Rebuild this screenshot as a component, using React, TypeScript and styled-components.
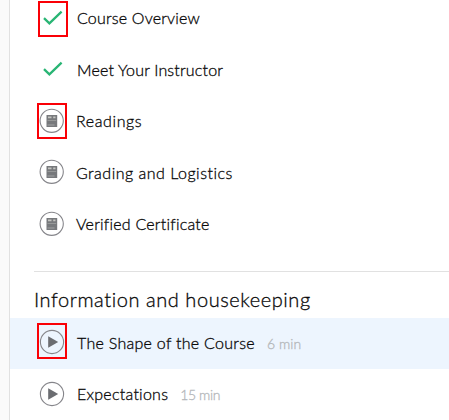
import React from "react";
import styled, { createGlobalStyle } from "styled-components";

const GlobalStyle = createGlobalStyle`
  * { box-sizing: border-box; }
  body { margin: 0; background: #fff; overflow: hidden; }
`;

const Page = styled.div`
  display: flex;
  width: 449px;
  height: 420px;
  overflow: hidden;
  color: #080808;
  font-family: Lato, "Open Sans", sans-serif;
  font-weight: 300;
  -webkit-text-stroke: 0.3px currentColor;
`;

const Gutter = styled.div`
  flex: 0 0 10px;
  background: #fafafa;
  border-right: 1px solid #e1e1e1;
`;

const Content = styled.main`
  flex: 1;
  min-width: 0;
`;

const LectureList = styled.ul`
  list-style: none;
  margin: 0;
  padding: 0;
`;

const OverviewList = styled(LectureList)`
  margin-top: -8px;
  height: 279px;
`;

const Row = styled.li<{ $height: number; $active?: boolean }>`
  display: flex;
  align-items: center;
  height: ${(p) => p.$height}px;
  padding-left: 29px;
  background: ${(p) => (p.$active ? "#edf5fe" : "transparent")};
`;

const IconFrame = styled.span<{ $lift: number; $gap: number }>`
  position: relative;
  flex: 0 0 26px;
  height: 26px;
  margin-right: ${(p) => p.$gap}px;
  margin-bottom: ${(p) => p.$lift * 2}px;

  svg { display: block; }
`;

/* Red highlight drawn over an icon */
const Marker = styled.span<{ $left: number; $top: number }>`
  position: absolute;
  left: ${(p) => p.$left}px;
  top: ${(p) => p.$top}px;
  width: 30px;
  height: 36px;
  border: 2px solid #fa0006;
`;

const Label = styled.span<{ $spacing: number; $raise?: number }>`
  font-size: 16px;
  line-height: 20px;
  white-space: nowrap;
  margin-bottom: ${(p) => (p.$raise ?? 0) * 2}px;
  letter-spacing: ${(p) => p.$spacing}px;
`;

const Duration = styled.span<{ $spacing: number; $raise?: number }>`
  margin-left: 12px;
  margin-bottom: ${(p) => (p.$raise ?? 0) * 2}px;
  color: #b4b7ba;
  font-size: 14px;
  line-height: 20px;
  white-space: nowrap;
  letter-spacing: ${(p) => p.$spacing}px;
`;

const SectionTitle = styled.h2`
  margin: 0 0 0 24px;
  height: 47px;
  padding-top: 15px;
  border-top: 1px solid #e1e1e1;
  font-size: 20px;
  font-weight: 300;
  line-height: 25px;
  letter-spacing: 0.57px;
  white-space: nowrap;
`;

const CheckIcon = () => (
  <svg width="26" height="26" viewBox="0 0 26 26" fill="none">
    <path d="M5 13.2 10.4 18.3 22.6 6.6" stroke="#29b574" strokeWidth="2.3" />
  </svg>
);

const ReadingIcon = () => (
  <svg width="26" height="26" viewBox="0 0 26 26" fill="none">
    <circle cx="12.7" cy="12.8" r="11.6" stroke="#85858a" strokeWidth="1.1" />
    <path d="M7.5 7h10.7v12H7.5z" fill="#77797c" />
    <path d="M9 8.5h3.5v1.7H9zM14.2 8.5h2.3v1.7h-2.3z" fill="#c3c4c0" />
    <path d="M8.5 12.2h8.7v.8H8.5zM8.5 16.6h7v.8h-7z" fill="#a2a4a3" />
  </svg>
);

const PlayIcon = () => (
  <svg width="26" height="26" viewBox="0 0 26 26" fill="none">
    <circle cx="13" cy="13" r="11.6" stroke="#85858a" strokeWidth="1.1" />
    <path d="M9.2 7.3v11.4l10-5.7z" fill="#6b6d71" />
  </svg>
);

const icons = { check: CheckIcon, reading: ReadingIcon, play: PlayIcon };

type Lecture = {
  title: string;
  icon: keyof typeof icons;
  height: number;
  spacing: number;
  lift?: number;
  raise?: number;
  marker?: [number, number];
  active?: boolean;
  duration?: string;
  durationSpacing?: number;
};

const overview: Lecture[] = [
  { title: "Course Overview", icon: "check", height: 52, spacing: 0.2, marker: [-1, -4] },
  { title: "Meet Your Instructor", icon: "check", height: 51, spacing: 0.18, lift: 0.5 },
  { title: "Readings", icon: "reading", height: 52, spacing: 0.6, marker: [-2, -5] },
  { title: "Grading and Logistics", icon: "reading", height: 51, spacing: 0.5, lift: 0.5 },
  { title: "Verified Certificate", icon: "reading", height: 52, spacing: 0.22 },
];

const housekeeping: Lecture[] = [
  { title: "The Shape of the Course", icon: "play", height: 51, spacing: 0.28, lift: 1.5, raise: 0.5, marker: [-2, -6], active: true, duration: "6 min", durationSpacing: 0.1 },
  { title: "Expectations", icon: "play", height: 52, spacing: 0.25, lift: 1, raise: 1, duration: "15 min", durationSpacing: -0.4 },
];

const LectureRow = ({ lecture }: { lecture: Lecture }) => {
  const Icon = icons[lecture.icon];
  return (
    <Row $height={lecture.height} $active={lecture.active}>
      <IconFrame $lift={lecture.lift ?? 0} $gap={lecture.icon === "reading" ? 11 : 12}>
        <Icon />
        {lecture.marker && <Marker $left={lecture.marker[0]} $top={lecture.marker[1]} />}
      </IconFrame>
      <Label $spacing={lecture.spacing} $raise={lecture.raise}>{lecture.title}</Label>
      {lecture.duration && (
        <Duration $spacing={lecture.durationSpacing ?? 0} $raise={(lecture.raise ?? 0) - 0.5}>
          {lecture.duration}
        </Duration>
      )}
    </Row>
  );
};

export default function App() {
  return (
    <>
      <GlobalStyle />
      <Page>
        <Gutter />
        <Content>
          <OverviewList>
            {overview.map((lecture) => (
              <LectureRow key={lecture.title} lecture={lecture} />
            ))}
          </OverviewList>
          <SectionTitle>Information and housekeeping</SectionTitle>
          <LectureList>
            {housekeeping.map((lecture) => (
              <LectureRow key={lecture.title} lecture={lecture} />
            ))}
          </LectureList>
        </Content>
      </Page>
    </>
  );
}
